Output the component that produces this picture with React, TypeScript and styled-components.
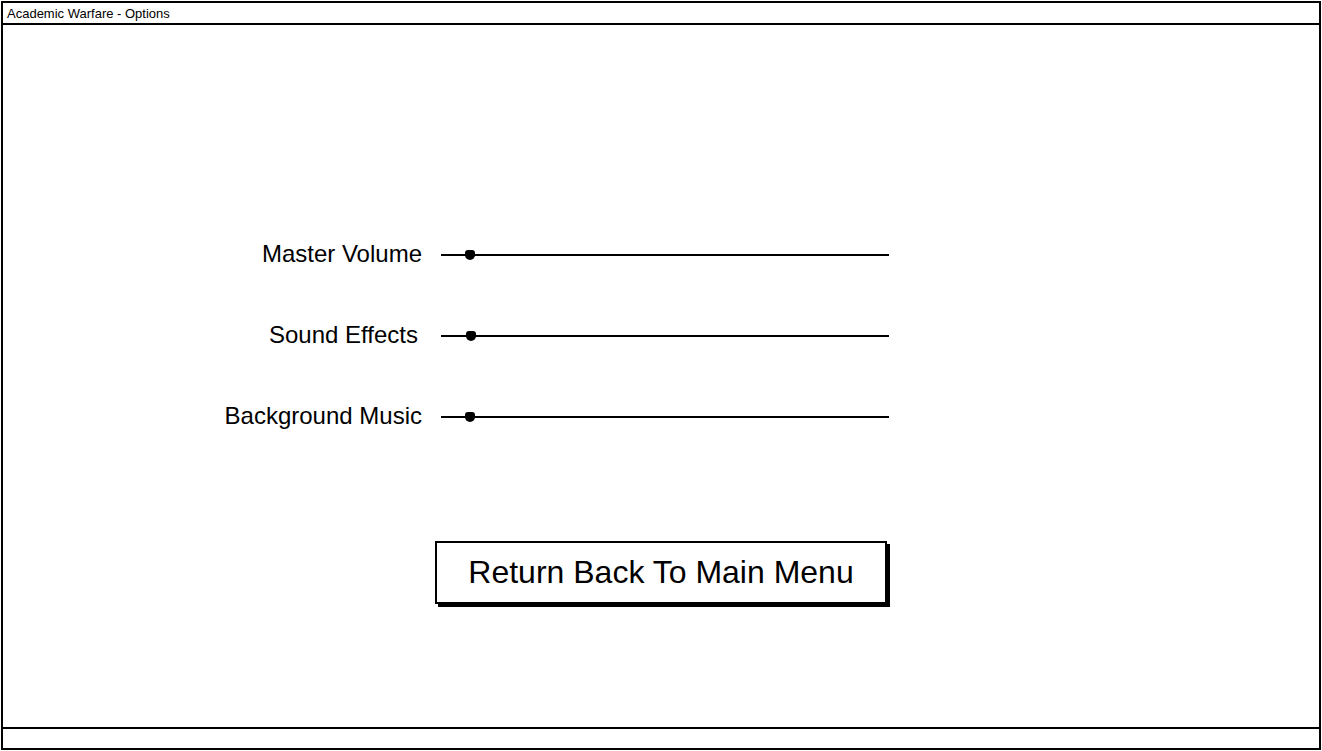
import { createGlobalStyle, styled } from 'styled-components'

const GlobalStyle = createGlobalStyle`
  html, body {
    margin: 0;
    padding: 0;
    background: #ffffff;
  }
  body {
    font-family: "Liberation Sans", Arial, sans-serif;
    color: #000;
  }
  * { box-sizing: border-box; }
`

const Window = styled.div`
  margin: 1px;
  width: 1320px;
  height: 749px;
  border: 2px solid #000;
  display: flex;
  flex-direction: column;
  background: #fff;
`

const TitleBar = styled.div`
  height: 22px;
  border-bottom: 2px solid #000;
  display: flex;
  align-items: center;
  padding-left: 4px;
  font-size: 13px;
`

const Content = styled.div`
  flex: 1;
  display: flex;
  flex-direction: column;
  align-items: center;
  padding-top: 215px;
`

const Form = styled.div`
  align-self: flex-start;
  display: grid;
  grid-template-columns: 419px 448px;
  grid-auto-rows: 30px;
  column-gap: 19px;
  row-gap: 51px;
  align-items: center;
`

const Label = styled.div<{ $inset?: number }>`
  text-align: right;
  font-size: 24px;
  line-height: 30px;
  margin-top: -3px;
  padding-right: ${({ $inset }) => $inset ?? 0}px;
`

const Track = styled.div`
  position: relative;
  height: 2px;
  background: #000;
`

const Thumb = styled.div`
  position: absolute;
  top: -4px;
  width: 10px;
  height: 10px;
  border-radius: 3px 3px 50% 50%;
  background: #000;
`

const Button = styled.button`
  margin-top: 109px;
  width: 452px;
  height: 63px;
  border: 2px solid #000;
  background: #fff;
  box-shadow: 3px 3px 0 #000;
  font-family: "Liberation Sans", Arial, sans-serif;
  font-size: 32px;
  color: #000;
  padding: 0;
  cursor: pointer;
`

const StatusBar = styled.div`
  margin-top: auto;
  height: 21px;
  border-top: 2px solid #000;
`

const sliders = [
  { label: 'Master Volume', value: 29, inset: 0 },
  { label: 'Sound Effects', value: 30, inset: 4 },
  { label: 'Background Music', value: 29, inset: 0 },
]

export default function App() {
  return (
    <>
      <GlobalStyle />
      <Window>
        <TitleBar>Academic Warfare - Options</TitleBar>
        <Content>
          <Form>
            {sliders.flatMap(s => [
              <Label key={s.label} $inset={s.inset}>{s.label}</Label>,
              <Track key={s.label + '-t'}>
                <Thumb style={{ left: s.value - 5 }} />
              </Track>,
            ])}
          </Form>
          <Button>Return Back To Main Menu</Button>
        </Content>
        <StatusBar />
      </Window>
    </>
  )
}
